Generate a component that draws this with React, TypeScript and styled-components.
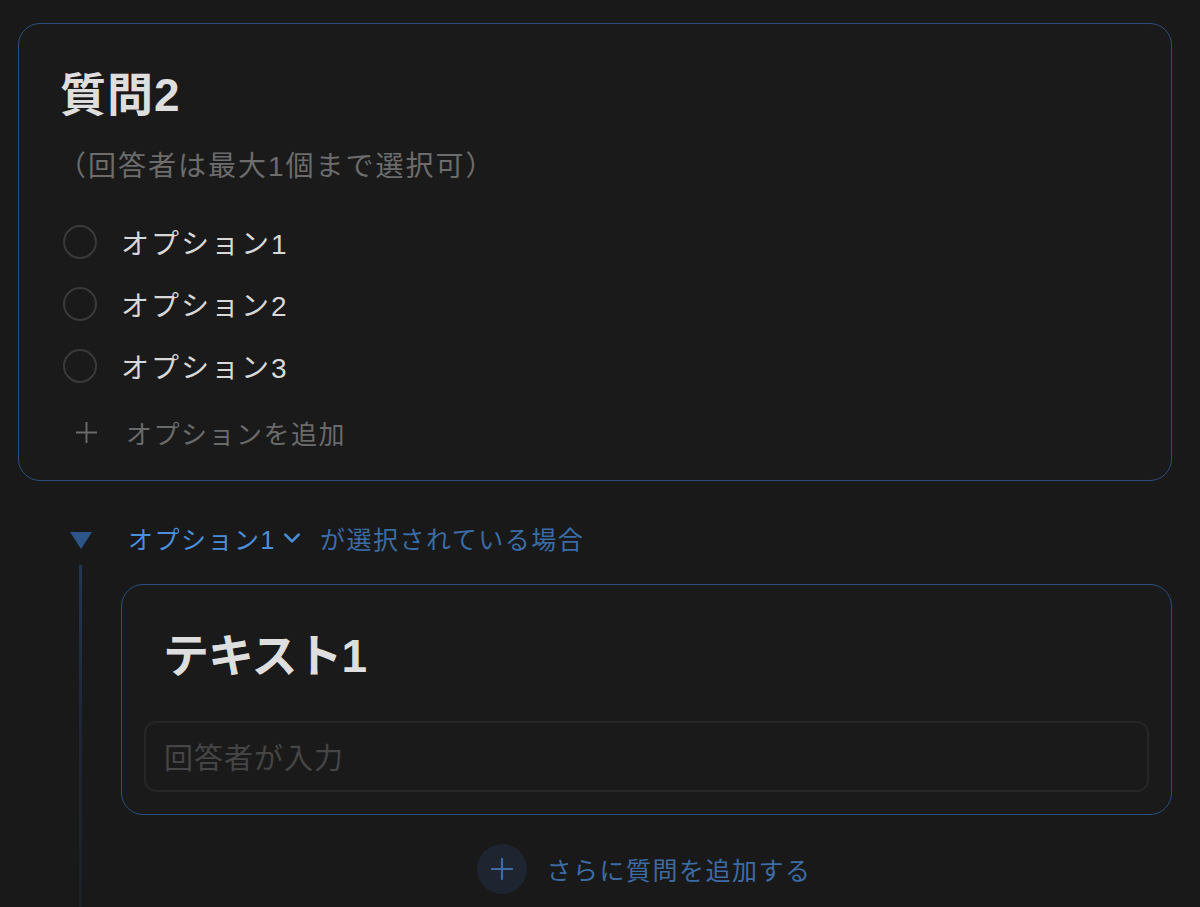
import styled, { createGlobalStyle } from 'styled-components'

const GlobalStyle = createGlobalStyle`
  html, body {
    margin: 0;
    padding: 0;
    background: #191919;
  }
  body {
    font-family: "Liberation Sans", "Noto Sans CJK JP", sans-serif;
    color: #d6d6d6;
  }
`

const Page = styled.div`
  padding: 23px 28px 60px 18px;
  min-height: 907px;
  box-sizing: border-box;
`

const Card = styled.div<{ $pad: string }>`
  border: 1px solid #2c4e7c;
  border-radius: 22px;
  padding: ${p => p.$pad};
  background: #1a1a1a;
`

const Title = styled.h2<{ $indent?: number; $spacing?: number }>`
  margin: 0;
  padding-left: ${p => p.$indent ?? 0}px;
  font-size: 46px;
  line-height: 1.4;
  font-weight: 700;
  color: #dedede;
  letter-spacing: ${p => p.$spacing ?? 1}px;
`

const Subtitle = styled.div`
  margin-top: 22px;
  font-size: 28px;
  line-height: 36px;
  color: #6c6c6c;
  letter-spacing: 2px;
  margin-left: -2px;
`

const OptionList = styled.div`
  margin-top: 37px;
  display: flex;
  flex-direction: column;
  gap: 22px;
`

const OptionRow = styled.div`
  display: flex;
  align-items: center;
  height: 40px;
`

const Radio = styled.span`
  width: 30px;
  height: 30px;
  border: 2px solid #3a3a3a;
  border-radius: 50%;
  margin-left: 3px;
  flex: none;
`

const OptionLabel = styled.span<{ $muted?: boolean }>`
  margin-left: ${p => (p.$muted ? 28 : 24)}px;
  font-size: ${p => (p.$muted ? 26 : 28)}px;
  letter-spacing: ${p => (p.$muted ? 1.5 : 2)}px;
  color: ${p => (p.$muted ? '#6a6a6a' : '#d8d8d8')};
`

const AddOptionRow = styled(OptionRow)`
  margin-top: 26px;
  cursor: pointer;
`

const PlusIcon = styled.svg`
  margin-left: 15px;
  flex: none;
`

const Branch = styled.div`
  margin-top: 38px;
`

const BranchHeader = styled.div`
  display: flex;
  align-items: center;
  padding-left: 52px;
  height: 38px;
  font-size: 25px;
  letter-spacing: 1.5px;
`

const Triangle = styled.span`
  width: 0;
  height: 0;
  border-left: 11px solid transparent;
  border-right: 11px solid transparent;
  border-top: 17px solid #2d5587;
  margin-top: 4px;
`

const OptionSelect = styled.span`
  display: flex;
  align-items: center;
  margin-left: 36px;
  color: #4a8fdc;
  cursor: pointer;
`

const Condition = styled.span`
  margin-left: 18px;
  color: #3b6ca6;
`

const BranchBody = styled.div`
  display: grid;
  grid-template-columns: 103px 1fr;
  margin-top: 8px;
`

const Rail = styled.div`
  margin-left: 61px;
  width: 3px;
  background: linear-gradient(#223754, #1d2634 40%, #1b1f26);
  margin-bottom: -80px;
`

const BranchContent = styled.div`
  padding-top: 19px;
`

const InputBox = styled.div`
  margin-top: 32px;
  height: 67px;
  border: 2px solid #262626;
  border-radius: 12px;
  display: flex;
  align-items: center;
  padding-left: 18px;
  font-size: 29px;
  color: #454545;
  letter-spacing: 1px;
`

const AddQuestion = styled.div`
  margin-top: 29px;
  display: flex;
  align-items: center;
  justify-content: center;
  gap: 19px;
  padding-right: 4px;
`

const RoundButton = styled.span`
  width: 50px;
  height: 50px;
  border-radius: 50%;
  background: #1e2430;
  display: flex;
  align-items: center;
  justify-content: center;
`

const AddLabel = styled.span`
  font-size: 25px;
  letter-spacing: 1.5px;
  color: #3d6ba3;
`

const Plus = ({ size, color, width }: { size: number; color: string; width: number }) => (
  <svg width={size} height={size} viewBox="0 0 24 24" fill="none" stroke={color} strokeWidth={width} strokeLinecap="round">
    <path d="M12 1v22M1 12h22" />
  </svg>
)

const options = ['オプション1', 'オプション2', 'オプション3']

export default function App() {
  return (
    <>
      <GlobalStyle />
      <Page>
        <Card $pad="39px 41px 28px">
          <Title>質問2</Title>
          <Subtitle>（回答者は最大1個まで選択可）</Subtitle>
          <OptionList>
            {options.map(o => (
              <OptionRow key={o}>
                <Radio />
                <OptionLabel>{o}</OptionLabel>
              </OptionRow>
            ))}
          </OptionList>
          <AddOptionRow>
            <PlusIcon width="23" height="23" viewBox="0 0 24 24" fill="none" stroke="#6a6a6a" strokeWidth="2">
              <path d="M12 1v22M1 12h22" />
            </PlusIcon>
            <OptionLabel $muted>オプションを追加</OptionLabel>
          </AddOptionRow>
        </Card>

        <Branch>
          <BranchHeader>
            <Triangle />
            <OptionSelect>
              オプション1
              <svg width="20" height="20" viewBox="0 0 24 24" fill="none" stroke="#4a8fdc" strokeWidth="3.2" strokeLinecap="round" strokeLinejoin="round" style={{ marginLeft: 6 }}>
                <path d="M4 8l8 8 8-8" />
              </svg>
            </OptionSelect>
            <Condition>が選択されている場合</Condition>
          </BranchHeader>
          <BranchBody>
            <Rail />
            <BranchContent>
              <Card $pad="39px 22px 22px">
                <Title $indent={19} $spacing={-1}>テキスト1</Title>
                <InputBox>回答者が入力</InputBox>
              </Card>
              <AddQuestion>
                <RoundButton>
                  <Plus size={22} color="#3f6ba2" width={2.4} />
                </RoundButton>
                <AddLabel>さらに質問を追加する</AddLabel>
              </AddQuestion>
            </BranchContent>
          </BranchBody>
        </Branch>
      </Page>
    </>
  )
}
